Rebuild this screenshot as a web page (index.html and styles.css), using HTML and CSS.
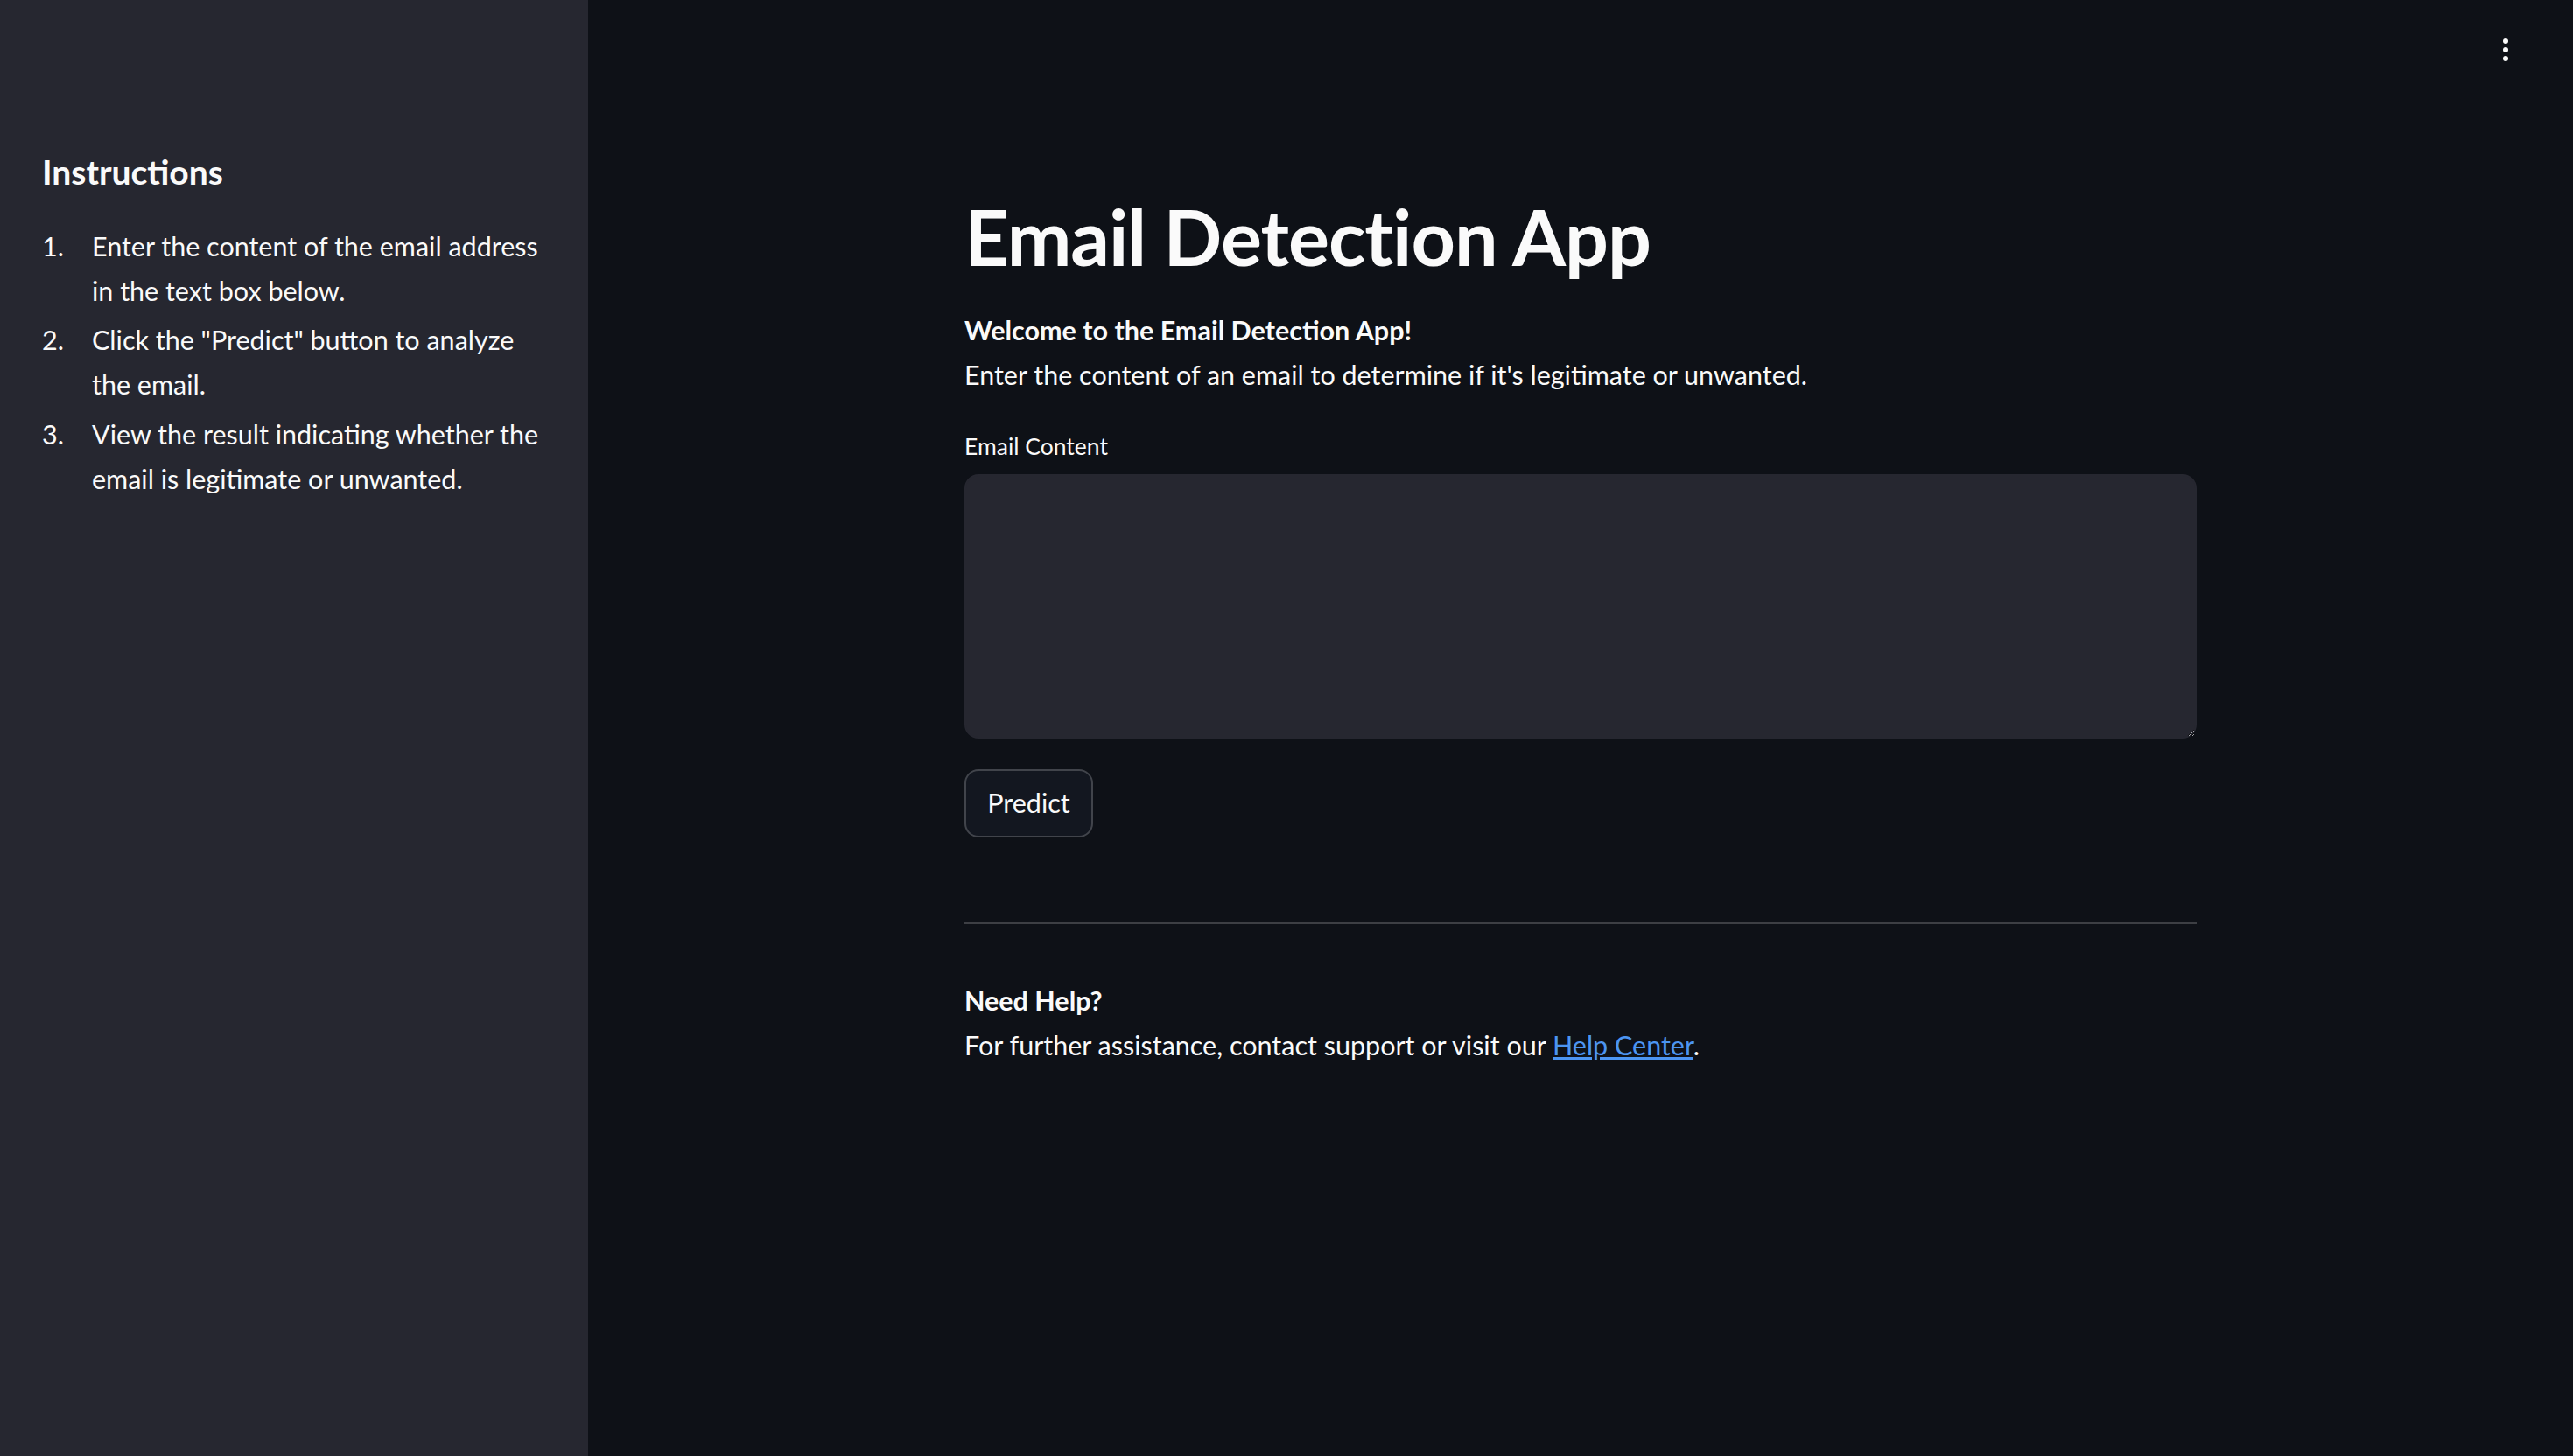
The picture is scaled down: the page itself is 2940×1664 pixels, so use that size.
FILE: index.html
```html
<!DOCTYPE html>
<html lang="en">
<head>
<meta charset="utf-8">
<title>Email Detection App</title>
<link rel="stylesheet" href="styles.css">
</head>
<body>
<div class="app">
  <aside class="sidebar">
    <h3 class="side-title">Instructions</h3>
    <ol class="steps">
      <li>Enter the content of the email address in the text box below.</li>
      <li>Click the "Predict" button to analyze the email.</li>
      <li>View the result indicating whether the email is legitimate or unwanted.</li>
    </ol>
  </aside>
  <main class="main">
    <div class="menu" aria-label="Main menu">
      <span class="dot"></span><span class="dot"></span><span class="dot"></span>
    </div>
    <div class="block">
      <h1 class="title">Email Detection App</h1>
      <p class="text strong">Welcome to the Email Detection App!</p>
      <p class="text">Enter the content of an email to determine if it's legitimate or unwanted.</p>
      <label class="label" for="email">Email Content</label>
      <textarea class="area" id="email"></textarea>
      <button class="btn" type="button">Predict</button>
      <hr class="rule">
      <p class="text strong help-title">Need Help?</p>
      <p class="text">For further assistance, contact support or visit our <a class="link" href="#">Help Center</a>.</p>
    </div>
  </main>
</div>
</body>
</html>
```

FILE: styles.css
```css
html, body {
  margin: 0;
  padding: 0;
  height: 100%;
}
body {
  background: #0e1117;
  color: #fafafa;
  font-family: Lato, "Noto Sans", "Liberation Sans", sans-serif;
  font-size: 30.5px;
  line-height: 51.2px;
}
.app {
  display: flex;
  min-height: 100vh;
}
.sidebar {
  width: 672px;
  flex: 0 0 672px;
  background: #262730;
  box-sizing: border-box;
  padding: 173px 40px 0 48px;
}
.side-title {
  margin: 0 0 36px 0;
  font-size: 39px;
  font-weight: 700;
  line-height: 1.2;
}
.steps {
  margin: 0;
  padding: 0;
  list-style: none;
  counter-reset: step;
}
.steps li {
  counter-increment: step;
  display: flex;
  margin: 0 0 5px 0;
}
.steps li::before {
  content: counter(step) ".";
  flex: 0 0 57px;
}
.main {
  flex: 1;
  position: relative;
  display: flex;
  justify-content: center;
}
.menu {
  position: absolute;
  top: 44px;
  right: 74px;
  display: flex;
  flex-direction: column;
  gap: 4px;
}
.dot {
  width: 6px;
  height: 6px;
  border-radius: 50%;
  background: #fafafa;
}
.block {
  width: 1408px;
  padding-top: 218px;
  display: flex;
  flex-direction: column;
  align-items: flex-start;
}
.title {
  margin: 0 0 28px 0;
  font-size: 88px;
  font-weight: 700;
  line-height: 1.2;
  letter-spacing: -1px;
}
.text {
  margin: 0;
}
.strong {
  font-weight: 700;
}
.label {
  margin-top: 34px;
  font-size: 26.5px;
  line-height: 44.8px;
  margin-bottom: 9px;
}
.area {
  display: block;
  width: 100%;
  height: 302px;
  box-sizing: border-box;
  background: #262730;
  border: 2px solid #262730;
  border-radius: 16px;
  color: #fafafa;
  font: inherit;
  padding: 16px 24px;
  resize: vertical;
  outline: none;
  margin: 0;
}
.btn {
  margin-top: 35px;
  height: 78px;
  width: 147px;
  padding: 0;
  background: #131720;
  color: #fafafa;
  border: 2px solid rgba(250, 250, 250, 0.2);
  border-radius: 16px;
  font-family: inherit;
  font-size: 30.5px;
  line-height: 1.6;
}
.rule {
  width: 100%;
  margin: 97px 0 0 0;
  border: 0;
  height: 2px;
  background: rgba(250, 250, 250, 0.2);
}
.help-title {
  margin-top: 62px;
}
.link {
  color: #4c95f2;
  text-decoration: underline;
}
```
